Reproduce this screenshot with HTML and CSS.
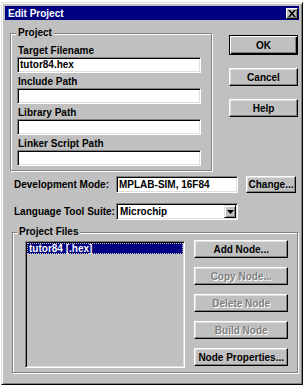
FILE: index.html
```html
<!DOCTYPE html>
<html lang="en">

<head>
    <meta charset="UTF-8" />
    <meta name="viewport" content="width=device-width, initial-scale=1.0" />
    <title>Edit Project</title>
    <link rel="stylesheet" href="styles.css">
</head>

<body>
    <div class="window">
        <div class="titlebar">
            <span class="title">Edit Project</span>
            <button class="close">
                <svg width="8" height="7" viewBox="0 0 8 7">
                    <path d="M0 0h2l2 2.2 2-2.2h2L5 3.5 8 7H6L4 4.8 2 7H0l3-3.5z" fill="#000" />
                </svg>
            </button>
        </div>

        <div class="content">
            <div class="top">
                <div class="group project">
                    <div class="legend">Project</div>
                    <div class="label">Target Filename</div>
                    <div class="field">tutor84.hex</div>
                    <div class="label">Include Path</div>
                    <div class="field"></div>
                    <div class="label">Library Path</div>
                    <div class="field"></div>
                    <div class="label">Linker Script Path</div>
                    <div class="field"></div>
                </div>
                <div class="actions">
                    <button class="btn default">OK</button>
                    <button class="btn">Cancel</button>
                    <button class="btn">Help</button>
                </div>
            </div>

            <div class="row mode-row">
                <span class="row-label">Development Mode:</span>
                <div class="field wide">MPLAB-SIM, 16F84</div>
                <button class="btn change">Change...</button>
            </div>

            <div class="row suite-row">
                <span class="row-label">Language Tool Suite:</span>
                <div class="field wide combo">
                    <span>Microchip</span>
                    <span class="arrow">
                        <svg width="7" height="4" viewBox="0 0 7 4">
                            <path d="M0 0h7L3.5 4z" fill="#000" />
                        </svg>
                    </span>
                </div>
            </div>

            <div class="group files">
                <div class="legend">Project Files</div>
                <div class="files-body">
                    <div class="list">
                        <div class="item selected">tutor84 [.hex]</div>
                    </div>
                    <div class="node-actions">
                        <button class="btn">Add Node...</button>
                        <button class="btn" disabled>Copy Node...</button>
                        <button class="btn" disabled>Delete Node</button>
                        <button class="btn" disabled>Build Node</button>
                        <button class="btn">Node Properties...</button>
                    </div>
                </div>
            </div>
        </div>
    </div>
</body>

</html>
```

FILE: styles.css
```css
body {
    margin: 0;
    background: #fff;
    font: bold 10px "Liberation Sans", Arial, sans-serif;
    color: #000;
}

.window {
    width: 302px;
    height: 383px;
    margin: 2px 0 0 1px;
    box-sizing: border-box;
    padding: 3px;
    background: #c0c0c0;
    border: 1px solid;
    border-color: #dfdfdf #000 #000 #dfdfdf;
    box-shadow: inset 1px 1px #fff, inset -1px -1px #808080;
}

.titlebar {
    height: 14px;
    display: flex;
    align-items: center;
    justify-content: space-between;
    padding: 0 1px 0 3px;
    background: #000080;
    color: #fff;
}

.close {
    width: 12px;
    height: 11px;
    padding: 0;
    display: flex;
    align-items: center;
    justify-content: center;
    background: #c0c0c0;
    border: 1px solid;
    border-color: #fff #000 #000 #fff;
    box-shadow: inset -1px -1px #808080;
}

.content {
    padding: 0 1px 0 5px;
}

.top {
    display: flex;
    align-items: flex-start;
}

/* etched group box */
.group {
    box-sizing: border-box;
    border: 1px solid #808080;
    box-shadow: inset 1px 1px #fff, 1px 1px #fff;
}

.legend {
    width: max-content;
    margin-top: -7px;
    padding: 0 2px;
    line-height: 12px;
    background: #c0c0c0;
}

.project {
    width: 202px;
    margin-top: 13px;
    padding: 0 10px 4px 6px;
}

.project .legend {
    margin-left: -1px;
}

.label {
    height: 15px;
    padding: 3px 0 0 1px;
    box-sizing: border-box;
    line-height: 12px;
}

.project .legend + .label {
    margin-top: 3px;
}

.field {
    height: 16px;
    box-sizing: border-box;
    padding-left: 2px;
    line-height: 14px;
    background: #fff;
    border: 1px solid;
    border-color: #808080 #fff #fff #808080;
    box-shadow: inset 1px 1px #000, inset -1px -1px #dfdfdf;
}

.actions {
    margin: 15px 0 0 auto;
    width: 69px;
    display: flex;
    flex-direction: column;
    gap: 13px;
}

.btn {
    display: block;
    height: 18px;
    box-sizing: border-box;
    padding: 0;
    font: inherit;
    color: #000;
    text-align: center;
    background: #c0c0c0;
    border: 1px solid;
    border-color: #fff #000 #000 #fff;
    box-shadow: inset -1px -1px #808080, inset 1px 1px #dfdfdf;
}

.btn.default {
    height: 20px;
    border-color: #000;
    box-shadow: inset 1px 1px #fff, inset -1px -1px #000, inset -2px -2px #808080;
}

.btn:disabled {
    color: #808080;
    text-shadow: 1px 1px #fff;
}

.row {
    display: flex;
    align-items: center;
}

.mode-row {
    margin-top: 5px;
}

.suite-row {
    margin-top: 10px;
}

.row-label {
    width: 102px;
    margin-left: 4px;
}

.field.wide {
    width: 122px;
    height: 17px;
    line-height: 15px;
}

.change {
    width: 50px;
    height: 17px;
    margin-left: 8px;
}

.combo {
    display: flex;
    align-items: center;
    justify-content: space-between;
    padding: 0 1px 0 3px;
}

.arrow {
    width: 12px;
    height: 13px;
    box-sizing: border-box;
    display: flex;
    align-items: center;
    justify-content: center;
    background: #c0c0c0;
    border: 1px solid;
    border-color: #dfdfdf #000 #000 #dfdfdf;
    box-shadow: inset 1px 1px #fff, inset -1px -1px #808080;
}

.files {
    width: 286px;
    margin: 12px 0 0 2px;
    padding: 0 9px 4px 12px;
}

.files .legend {
    margin-left: -8px;
}

.files-body {
    display: flex;
    gap: 9px;
    margin-top: 3px;
}

.list {
    width: 161px;
    height: 127px;
    box-sizing: border-box;
    padding: 1px 0 0 1px;
    border: 1px solid;
    border-color: #808080 #fff #fff #808080;
    box-shadow: inset 1px 1px #000, inset -1px -1px #dfdfdf;
}

.item {
    height: 11px;
    line-height: 9px;
    padding-left: 1px;
}

.item.selected {
    margin-right: 1px;
    background: #000080;
    color: #fff;
    border: 1px dotted #c0c0c0;
    box-sizing: border-box;
}

.node-actions {
    width: 94px;
    margin-top: -1px;
    display: flex;
    flex-direction: column;
    gap: 9px;
}
```
